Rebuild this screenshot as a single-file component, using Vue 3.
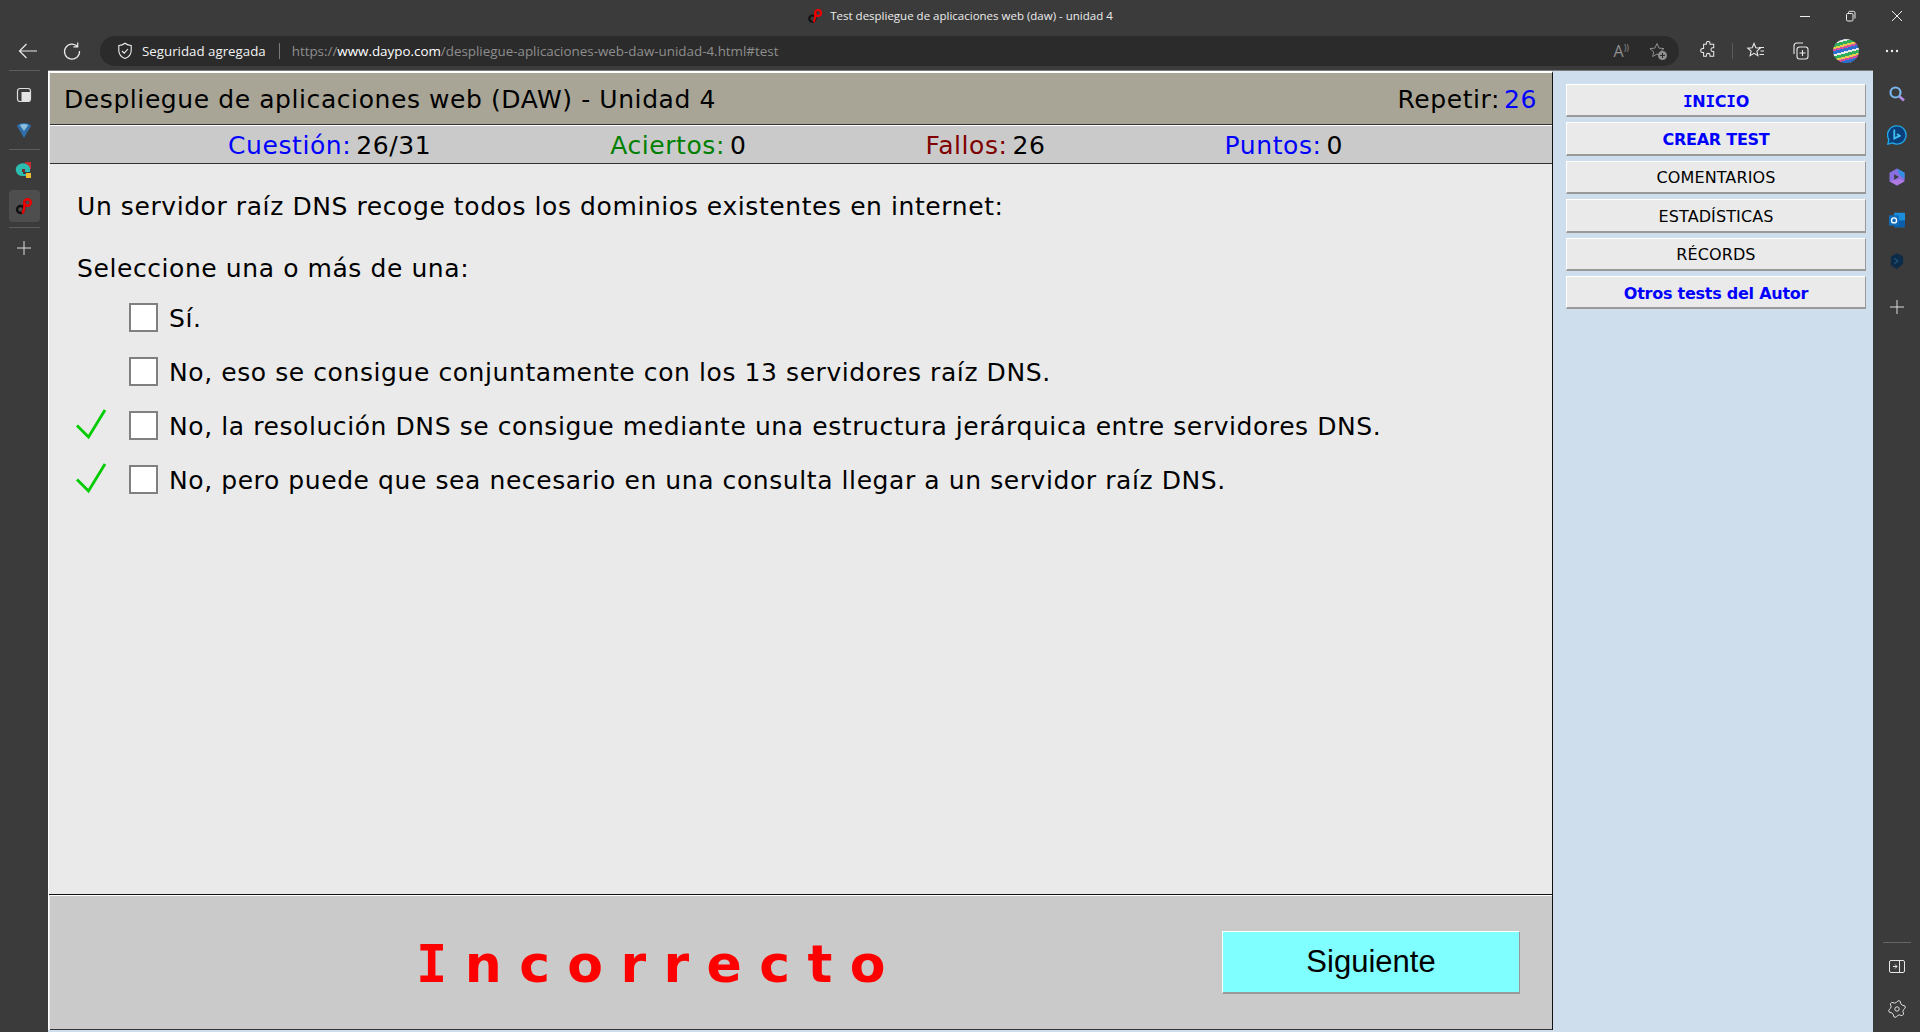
<script setup>
const menu = [
  { t: 'INICIO', c: 'blue-b' },
  { t: 'CREAR TEST', c: 'blue-b' },
  { t: 'COMENTARIOS', c: '' },
  { t: 'ESTADÍSTICAS', c: '' },
  { t: 'RÉCORDS', c: '' },
  { t: 'Otros tests del Autor', c: 'blue-b' },
]
const stats = [
  { l: 'Cuestión:', v: '26/31', c: 'blue' },
  { l: 'Aciertos:', v: '0', c: 'green' },
  { l: 'Fallos:', v: '26', c: 'red' },
  { l: 'Puntos:', v: '0', c: 'blue' },
]
const opts = [
  { t: 'Sí.', ok: false },
  { t: 'No, eso se consigue conjuntamente con los 13 servidores raíz DNS.', ok: false },
  { t: 'No, la resolución DNS se consigue mediante una estructura jerárquica entre servidores DNS.', ok: true },
  { t: 'No, pero puede que sea necesario en una consulta llegar a un servidor raíz DNS.', ok: true },
]
const parts = (m) => (m.c ? m.t.split(/(I)/).filter(Boolean) : [m.t])
const gear = (() => {
  const pts = []
  for (let i = 0; i < 24; i++) {
    const a = (i / 24) * Math.PI * 2
    const r = [8.4, 8.4, 6.4, 6.4][i % 4]
    pts.push((9 + r * Math.sin(a + 0.13)).toFixed(2) + ' ' + (9 - r * Math.cos(a + 0.13)).toFixed(2))
  }
  return 'M' + pts.join('L') + 'Z'
})()
</script>

<template>
  <div class="browser">
    <div class="titlebar">
      <svg class="favicon" width="16" height="16" viewBox="0 0 18 18"><circle cx="6" cy="12" r="3.500" fill="none" stroke="#111" stroke-width="2.400"/><path d="M9 12 C9 8 9.500 6 10 4" fill="none" stroke="#111" stroke-width="2.400"/><circle cx="12.500" cy="5.500" r="3.300" fill="none" stroke="#e00" stroke-width="2.400"/><path d="M9.500 6 C9.500 10 9 13 7.500 16" fill="none" stroke="#e00" stroke-width="2.400"/></svg>
      <span class="wintitle">Test despliegue de aplicaciones web (daw) - unidad 4</span>
      <div class="winbtns">
        <svg width="12" height="12" viewBox="0 0 12 12"><path d="M1 6.500H11" stroke="#eee"/></svg>
        <svg width="12" height="12" viewBox="0 0 12 12"><rect x="1.500" y="3.500" width="6.500" height="7.500" rx="1.200" fill="none" stroke="#eee"/><path d="M3.500 3.500V2.500a1.200 1.200 0 0 1 1.200-1.200H8.500a1.500 1.500 0 0 1 1.500 1.500V8.500" fill="none" stroke="#eee"/></svg>
        <svg width="12" height="12" viewBox="0 0 12 12"><path d="M1 1L11 11M11 1L1 11" stroke="#eee"/></svg>
      </div>
    </div>
    <div class="toolbar">
      <svg class="nav" width="20" height="20" viewBox="0 0 20 20"><path d="M19 10H1.500M8.500 3L1.500 10L8.500 17" fill="none" stroke="#eaeaea" stroke-width="1.200"/></svg>
      <svg class="nav" width="20" height="20" viewBox="0 0 20 20"><path d="M15.500 5.500A7.500 7.500 0 1 0 17.500 10M15.700 1.500V5.800H11.400" fill="none" stroke="#eaeaea" stroke-width="1.200"/></svg>
      <div class="addr">
        <svg class="shield" width="16" height="18" viewBox="0 0 16 18"><path d="M8 1.200C6 2.800 4 3.400 1.800 3.500V8.500c0 3.500 2.500 6.500 6.200 8 3.700-1.500 6.200-4.500 6.200-8V3.500C12 3.400 10 2.800 8 1.200Z" fill="none" stroke="#eee" stroke-width="1.100"/><path d="M5 9l2.200 2.200L11 7" fill="none" stroke="#eee" stroke-width="1.100"/></svg>
        <span class="sec">Seguridad agregada</span>
        <span class="sep"></span>
        <span class="url">https://<b>www.daypo.com</b>/despliegue-aplicaciones-web-daw-unidad-4.html#test</span>
        <span class="grow"></span>
        <span class="aa">A<small>))</small></span>
        <svg width="20" height="20" viewBox="0 0 20 20"><path d="M9 2.500l2 4.600 5 .5-3.700 3.300 1 4.600-4.300-2.500-4.300 2.500 1-4.600L1.900 7.600l5-.5Z" fill="none" stroke="#8f8f8f"/><circle cx="14.500" cy="14.500" r="4.500" fill="#8f8f8f"/><path d="M12 14.500h5M14.500 12v5" stroke="#2b2b2b"/></svg>
      </div>
      <svg class="tool puzzle" width="20" height="20" viewBox="0 0 20 20"><path d="M8 3a2 2 0 0 1 4 0v1h4v4h-1a2 2 0 0 0 0 4h1v5h-4v-1a2 2 0 0 0-4 0v1H5v-4H4a2.200 2.200 0 0 1 0-4.400h1V4h3Z" fill="none" stroke="#eaeaea" stroke-width="1.100" transform="translate(1 -.5) scale(.92)"/></svg>
      <span class="vsep"></span>
      <svg class="tool" width="20" height="20" viewBox="0 0 20 20"><path d="M8 2.500l1.800 4.300 4.400.4-3.300 2.900 1 4.500L8 12.300l-3.900 2.300 1-4.500L1.800 7.200l4.400-.4Z" fill="none" stroke="#eaeaea" stroke-width="1.100"/><path d="M13 6.500h5M14.500 10h3.500M13.500 13.500h4.500" stroke="#eaeaea" stroke-width="1.100"/></svg>
      <svg class="tool coll" width="20" height="20" viewBox="0 0 20 20"><rect x="6" y="6" width="11" height="12" rx="2.500" fill="none" stroke="#eaeaea" stroke-width="1.100"/><path d="M3 13V5a3 3 0 0 1 3-3h6" fill="none" stroke="#eaeaea" stroke-width="1.100"/><path d="M11.500 9v6M8.500 12h6" stroke="#eaeaea" stroke-width="1.100"/></svg>
      <div class="avatar"></div>
      <svg class="more" width="14" height="4" viewBox="0 0 14 4"><circle cx="2" cy="2" r="1.200" fill="#eee"/><circle cx="7" cy="2" r="1.200" fill="#eee"/><circle cx="12" cy="2" r="1.200" fill="#eee"/></svg>
    </div>
    <div class="body">
      <aside class="left">
        <span class="hr"></span>
        <svg class="ic" width="16" height="16" viewBox="0 0 16 16"><rect x="1.500" y="1.500" width="13" height="13" rx="2.500" fill="none" stroke="#ddd" stroke-width="1.200"/><path d="M5.500 5H14V12.500a1.500 1.500 0 0 1-1.500 1.500H5.500Z" fill="#e4e4e4"/></svg>
        <svg class="ic2" width="14" height="16" viewBox="0 0 14 16"><path d="M0 4a7 3 0 0 1 14 0L7 16Z" fill="#2f6ea6"/><path d="M3 3.500a4 1.500 0 0 1 8 0L7 9Z" fill="#8dbde0"/></svg>
        <span class="hr low"></span>
        <svg class="ic3" width="18" height="18" viewBox="0 0 18 18"><rect x="10" y="1" width="6" height="7" fill="#c62d2d"/><path d="M1 10a7 6 0 0 1 14-3v4H8v2h8v2h-8a7 6 0 0 1-7-5Z" fill="#2cbcb0"/><rect x="7" y="8" width="3" height="3" fill="#7a2a2a"/><rect x="11" y="12" width="5" height="5" fill="#f0bb30"/></svg>
        <div class="activetab">
          <svg width="18" height="18" viewBox="0 0 18 18"><circle cx="5.500" cy="12.500" r="3.500" fill="none" stroke="#111" stroke-width="2.400"/><path d="M9 12.500 C9 8 9.500 6 10 4" fill="none" stroke="#111" stroke-width="2.400"/><circle cx="12.500" cy="5.500" r="3.300" fill="none" stroke="#e00" stroke-width="2.400"/><path d="M9.500 6 C9.500 10 9.500 13 7.500 16.500" fill="none" stroke="#e00" stroke-width="2.400"/></svg>
        </div>
        <span class="hr tight"></span>
        <svg class="plus" width="16" height="16" viewBox="0 0 16 16"><path d="M8 1V15M1 8H15" stroke="#ddd"/></svg>
      </aside>

      <main class="page">
        <section class="test">
          <header class="head">
            <span>Despliegue de aplicaciones web (DAW) - Unidad 4</span>
            <span>Repetir:<i class="blue num">26</i></span>
          </header>
          <div class="stats">
            <span v-for="s in stats" :key="s.l" class="stat"><span :class="s.c">{{ s.l }}</span><span class="val">{{ s.v }}</span></span>
          </div>
          <div class="content">
            <p class="q">Un servidor raíz DNS recoge todos los dominios existentes en internet:</p>
            <p class="sel">Seleccione una o más de una:</p>
            <div class="opts">
              <div v-for="o in opts" :key="o.t" class="opt">
                <svg v-if="o.ok" class="check" width="32" height="32" viewBox="0 0 32 32"><path d="M2 17.500L13.500 29L30 2" fill="none" stroke="#0c0" stroke-width="2.800"/></svg>
                <span class="box"></span>
                <span class="otext">{{ o.t }}</span>
              </div>
            </div>
          </div>
          <footer class="foot">
            <div class="verdict"><span class="serif-i">I</span>ncorrecto</div>
            <button class="next">Siguiente</button>
          </footer>
        </section>
        <nav class="menu">
          <a v-for="m in menu" :key="m.t" class="mbtn" :class="m.c"><span><template v-for="(p, i) in parts(m)" :key="i"><span v-if="p === 'I'" class="serif-i">I</span><template v-else>{{ p }}</template></template></span></a>
        </nav>
      </main>

      <aside class="right">
        <svg width="16" height="16" viewBox="0 0 16 16"><circle cx="6.500" cy="6.500" r="5" fill="none" stroke="#78b6ec" stroke-width="2.200"/><path d="M10.500 10.500L15 14.500" stroke="#b48ae0" stroke-width="2.800"/></svg>
        <svg width="20" height="20" viewBox="0 0 22 22"><path d="M11 1a10 10 0 1 1-5 18.700L1 21l1-5A10 10 0 0 1 11 1Z" fill="#083e7a" stroke="#22a7e8" stroke-width="1.500"/><path d="M8 5v10l6-3-3-2" fill="none" stroke="#3fc0f0" stroke-width="2"/></svg>
        <svg width="16" height="18" viewBox="1.500 .5 17 19"><path d="M10 1l8 4.500v9L10 19l-8-4.500v-9Z" fill="#8a6fe0"/><path d="M10 1l8 4.500v6l-5-3Z" fill="#2f8fe0"/><path d="M2 14.500l8 4.500 8-4.500-5-2.500Z" fill="#b07ae0"/><path d="M7 7l5 3-5 3Z" fill="#3c3c3c"/></svg>
        <svg width="16" height="16" viewBox="0 1 19 17"><rect x="6" y="1" width="13" height="17" rx="1" fill="#1b8fdc"/><rect x="6" y="10" width="13" height="8" fill="#0d5ea8"/><rect x="0" y="4" width="12" height="12" rx="1" fill="#0f6cbd"/><circle cx="6" cy="10" r="3" fill="none" stroke="#fff" stroke-width="1.600"/></svg>
        <svg width="14" height="16" viewBox="0 0 16 18"><path d="M8 0l7 4v8l-7 6-7-4V4Z" fill="#0c2b47"/><path d="M5 6l4 3-4 3" fill="none" stroke="#2a5c82" stroke-width="1.200"/></svg>
        <svg width="14" height="14" viewBox="0 0 14 14"><path d="M7 0V14M0 7H14" stroke="#ddd"/></svg>
        <span class="grow"></span>
        <span class="rhr"></span>
        <svg width="16" height="13" viewBox="0 0 16 13"><rect x=".5" y=".5" width="15" height="12" rx="1.500" fill="none" stroke="#e6e6e6"/><path d="M10.500 1v11" stroke="#e6e6e6"/><path d="M4 6.500h4M6 4.500l2 2-2 2" fill="none" stroke="#e6e6e6"/></svg>
        <svg class="gear" width="18" height="18" viewBox="0 0 18 18"><circle cx="9" cy="9" r="2.200" fill="none" stroke="#ddd"/><path :d="gear" fill="none" stroke="#ddd"/></svg>
      </aside>
    </div>
  </div>
</template>

<style>
html, body { margin: 0; background: #3b3b3b; overflow: hidden; }
</style>
<style scoped>
.browser { width: 1920px; height: 1032px; display: flex; flex-direction: column; background: #3b3b3b; font-family: "DejaVu Sans", sans-serif; color: #000; overflow: hidden; }
.titlebar { height: 36px; display: flex; align-items: center; justify-content: center; position: relative; color: #ececec; font: 11.500px "Open Sans", sans-serif; flex: none; padding: 0 0 5px 0; box-sizing: border-box; }
.favicon { margin-right: 7px; }
.winbtns { position: absolute; right: 17px; top: 10px; display: flex; gap: 34px; }
.toolbar { height: 34px; display: flex; align-items: center; flex: none; padding-bottom: 4px; box-sizing: border-box; }
.nav { margin-left: 18px; }
.nav + .nav { margin-left: 24px; }
.addr { margin-left: 18px; width: 1579px; height: 30px; background: #2b2b2b; border-radius: 15px; display: flex; align-items: center; box-sizing: border-box; padding: 0 11px 0 17px; font: 13.300px "Open Sans", sans-serif; color: #f2f2f2; flex: none; }
.sec { margin-left: 9px; }
.sep { width: 1px; height: 16px; background: #7a7a7a; margin: 0 12px 0 13px; }
.url { color: #8e8e8e; font-size: 13.380px; }
.url b { color: #fff; font-weight: 400; }
.grow { flex: 1; }
.aa { color: #8f8f8f; font-size: 16px; margin-right: 19px; }
.aa small { font-size: 9px; vertical-align: 6px; }
.puzzle { margin-left: 19px; }
.vsep { width: 1px; height: 16px; background: #5a5a5a; margin: 0 13px 0 14px; }
.coll { margin-left: 25px; }
.avatar { width: 26px; height: 24px; margin-left: 22px; border-radius: 50%; background: repeating-linear-gradient(165deg, #2b6fd0 0 3px, #e8e8e8 3px 5px, #2fae5c 5px 8px, #e8c84f 8px 10px, #d04fa0 10px 12px); }
.more { margin-left: 26px; }
.body { flex: 1; display: flex; min-height: 0; }
.left { width: 48px; flex: none; display: flex; flex-direction: column; align-items: center; }
.hr { width: 31px; height: 1px; background: #5d5d5d; flex: none; }
.ic { margin-top: 16px; }
.ic2 { margin-top: 19px; }
.hr.low { margin-top: 11px; }
.ic3 { margin-top: 11px; }
.activetab { width: 31px; height: 32px; border-radius: 4px; background: #4e4e4e; margin-top: 11px; display: flex; align-items: center; justify-content: center; flex: none; }
.hr.tight { margin-top: 5px; }
.plus { margin-top: 12px; }
.page { flex: none; width: 1825px; display: flex; background: #cedeed; border-top: 1px solid #7a7a7a; box-sizing: border-box; }
.test { width: 1505px; flex: none; border-left: 1px solid #fff; border-right: 1px solid #111; background: #eaeaea; display: flex; flex-direction: column; box-sizing: border-box; border-top: 2px solid #fff; height: 959px; letter-spacing: .58px; }
.head { height: 51px; background: #a9a596; border-bottom: 1px solid #333; display: flex; justify-content: space-between; align-items: center; padding: 2px 15px 0 14px; box-sizing: content-box; height: 49px; font-size: 25px; flex: none; margin-left: 1px; }
.num { font-style: normal; margin-left: 4px; }
.stats { height: 39px; background: #cacaca; border-top: 1px solid #fff; border-bottom: 1px solid #333; display: flex; gap: 179px; font-size: 25px; flex: none; box-sizing: border-box; padding: 2px 0 0 178px; margin-left: 1px; align-items: center; }
.val { margin-left: 5px; }
.blue { color: #0000ff; }
.green { color: #008000; }
.red { color: #800000; }
.content { flex: 1; padding: 0 28px; font-size: 25px; border-bottom: 1px solid #111; }
.q { margin: 25px 0 0; line-height: 36px; }
.sel { margin: 26px 0 0; line-height: 36px; }
.opts { margin-top: 3px; }
.opt { position: relative; display: flex; align-items: center; height: 54px; padding-left: 52px; box-sizing: border-box; }
.otext { padding-top: 2px; }
.box { width: 29px; height: 29px; border: 2px solid #808080; background: #fff; margin-right: 11px; flex: none; box-sizing: border-box; }
.check { position: absolute; left: -2px; top: 10px; }
.foot { height: 135px; border-top: 1px solid #fff; background: #cacaca; position: relative; border-bottom: 1px solid #333; flex: none; margin-left: 1px; box-sizing: border-box; letter-spacing: 0; }
.verdict { position: absolute; left: 366px; top: 37px; font-size: 52px; font-weight: 700; color: #f00; letter-spacing: 17.400px; line-height: 62px; }
.serif-i { font-family: "DejaVu Sans Mono", monospace; font-weight: 700; }
.next { position: absolute; left: 1172px; top: 35px; width: 298px; height: 63px; background: #7fffff; box-sizing: border-box; border-style: solid; border-color: #fff #999 #999 #fff; border-width: 1px 1px 2px 1px; font: 31px "Liberation Sans", sans-serif; color: #000; padding: 0; }
.menu { flex: 1; display: flex; flex-direction: column; padding: 13px 7px 0 13px; gap: 5px; }
.mbtn { height: 33.400px; box-sizing: border-box; background: #eaeaea; border: 1px solid #fff; border-right-color: #999; border-bottom: 2px solid #999; padding-top: 2px; display: flex; align-items: center; justify-content: center; font-size: 16px; letter-spacing: .1px; }
.mbtn.blue-b { color: #0000ff; font-weight: 700; letter-spacing: -.25px; }
.right { width: 47px; flex: none; display: flex; flex-direction: column; align-items: center; }
.right > svg:nth-child(1) { margin-top: 16px; }
.right > svg:nth-child(2) { margin-top: 23px; }
.right > svg:nth-child(3) { margin-top: 23px; }
.right > svg:nth-child(4) { margin-top: 26px; }
.right > svg:nth-child(5) { margin-top: 25px; }
.right > svg:nth-child(6) { margin-top: 31px; }
.rhr { width: 28px; height: 1px; background: #666; margin-bottom: 17px; }
.gear { margin: 27px 0 14px; }
</style>
